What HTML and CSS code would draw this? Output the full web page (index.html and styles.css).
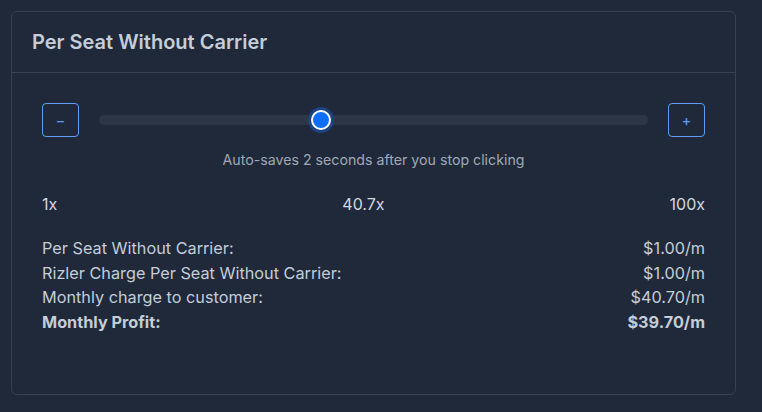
FILE: index.html
```html
<!DOCTYPE html>
<html>
<head>
<meta charset="utf-8">
<link rel="stylesheet" href="styles.css">
</head>
<body>
<div class="card">
  <div class="card-header">
    <h2 class="title">Per Seat Without Carrier</h2>
  </div>
  <div class="card-body">
    <div class="slider-row">
      <button class="step-btn">&minus;</button>
      <div class="track">
        <div class="thumb" style="left: calc(10px + (100% - 20px) * 0.401)"></div>
      </div>
      <button class="step-btn">+</button>
    </div>
    <div class="hint">Auto-saves 2 seconds after you stop clicking</div>
    <div class="range-labels">
      <span>1x</span>
      <span>40.7x</span>
      <span>100x</span>
    </div>
    <div class="rows">
      <div class="row"><span>Per Seat Without Carrier:</span><span>$1.00/m</span></div>
      <div class="row"><span>Rizler Charge Per Seat Without Carrier:</span><span>$1.00/m</span></div>
      <div class="row"><span>Monthly charge to customer:</span><span>$40.70/m</span></div>
      <div class="row total"><span>Monthly Profit:</span><span>$39.70/m</span></div>
    </div>
  </div>
</div>
</body>
</html>
```

FILE: styles.css
```css
html, body {
  margin: 0;
  padding: 0;
  background: #1f293a;
  font-family: Inter, "Noto Sans", sans-serif;
}
body {
  padding: 11px 26px 18px 11px;
}
.card {
  border: 1px solid #364152;
  border-radius: 6px;
  background: #1f293a;
  height: 384px;
  box-sizing: border-box;
}
.card-header {
  height: 60px;
  border-bottom: 1px solid #364152;
  display: flex;
  align-items: center;
  padding: 0 20px;
}
.title {
  margin: 0;
  font-size: 20px;
  font-weight: 600;
  color: #c5cdd9;
}
.card-body {
  padding: 30px 30px 0 30px;
}
.slider-row {
  display: flex;
  align-items: center;
  gap: 20px;
  height: 34px;
}
.step-btn {
  width: 37px;
  height: 34px;
  box-sizing: border-box;
  border: 1px solid #5f9df5;
  border-radius: 4px;
  background: transparent;
  color: #5f9df5;
  font-family: Inter, sans-serif;
  font-size: 15px;
  padding: 0;
  display: flex;
  align-items: center;
  justify-content: center;
}
.track {
  flex: 1;
  height: 10px;
  border-radius: 5px;
  background: #2c3646;
  position: relative;
}
.thumb {
  position: absolute;
  top: 50%;
  width: 20px;
  height: 20px;
  margin-left: -10px;
  margin-top: -10px;
  box-sizing: border-box;
  border-radius: 50%;
  background: #0d6efd;
  border: 2px solid #ffffff;
  box-shadow: 0 0 0 3px #1d4282;
}
.hint {
  text-align: center;
  margin-top: 13px;
  font-size: 14.2px;
  line-height: 20px;
  color: #a1a8b4;
}
.range-labels {
  display: flex;
  justify-content: space-between;
  margin-top: 24px;
  font-size: 16px;
  line-height: 20px;
  color: #d3d8e0;
}
.rows {
  margin-top: 22px;
  font-size: 16.25px;
  line-height: 24.6px;
  color: #c5cdd9;
}
.row {
  display: flex;
  justify-content: space-between;
}
.row.total {
  font-weight: 700;
}
```
